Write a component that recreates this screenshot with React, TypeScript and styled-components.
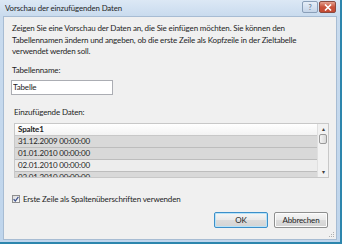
import React, { useState } from 'react';
import { styled, createGlobalStyle } from 'styled-components';

const GlobalStyle = createGlobalStyle`
    html, body {
        margin: 0;
        padding: 0;
        width: 342px;
        height: 244px;
        overflow: hidden;
        font-family: Lato, "Open Sans", sans-serif;
    }
`

const rows = ['31.12.2009 00:00:00', '01.01.2010 00:00:00', '02.01.2010 00:00:00', '03.01.2010 00:00:00'];

export default function App() {
    const [ tableName, setTableName ] = useState('Tabelle');
    const [ useHeader, setUseHeader ] = useState(true);

    return (
        <>
            <GlobalStyle />
            <Window>
                <TitleBar>
                    <Title>Vorschau der einzufügenden Daten</Title>
                    <TitleButtons>
                        <HelpButton>?</HelpButton>
                        <CloseButton>
                            <svg width="8" height="7" viewBox="0 0 8 7">
                                <path d="M1 0.5 L7 6.5 M7 0.5 L1 6.5" stroke="#fff" strokeWidth="1.6" />
                            </svg>
                        </CloseButton>
                    </TitleButtons>
                </TitleBar>
                <Client>
                    <Intro>
                        Zeigen Sie eine Vorschau der Daten an, die Sie einfügen möchten. Sie können den
                        Tabellennamen ändern und angeben, ob die erste Zeile als Kopfzeile in der Zieltabelle
                        verwendet werden soll.
                    </Intro>
                    <FieldLabel>Tabellenname:</FieldLabel>
                    <NameInput value={tableName} onChange={(e) => setTableName(e.target.value)} />
                    <FieldLabel indent>Einzufügende Daten:</FieldLabel>
                    <Grid>
                        <GridBody>
                            <HeaderCell>Spalte1</HeaderCell>
                            {rows.map((r, i) => (
                                <Cell key={r} light={i === 2}>{r}</Cell>
                            ))}
                        </GridBody>
                        <ScrollBar>
                            <ScrollArrow>▴</ScrollArrow>
                            <Thumb />
                            <ScrollTrack />
                            <ScrollArrow>▾</ScrollArrow>
                        </ScrollBar>
                    </Grid>
                    <CheckRow>
                        <CheckBox checked={useHeader} onClick={() => setUseHeader(!useHeader)}>
                            {useHeader && (
                                <svg width="6" height="6" viewBox="0 0 6 6">
                                    <path d="M0.6 3.2 L2.3 5 L5.4 0.8" stroke="#3c4f8c" strokeWidth="1.2" fill="none" />
                                </svg>
                            )}
                        </CheckBox>
                        <span>Erste Zeile als Spaltenüberschriften verwenden</span>
                    </CheckRow>
                    <ButtonRow>
                        <DialogButton primary>OK</DialogButton>
                        <DialogButton>Abbrechen</DialogButton>
                    </ButtonRow>
                    <Grip>
                        <svg width="6" height="6" viewBox="0 0 6 6">
                            <rect x="4" y="0" width="1" height="1" fill="#b0b0b0" />
                            <rect x="2" y="2" width="1" height="1" fill="#b0b0b0" />
                            <rect x="4" y="2" width="1" height="1" fill="#b0b0b0" />
                            <rect x="0" y="4" width="1" height="1" fill="#b0b0b0" />
                            <rect x="2" y="4" width="1" height="1" fill="#b0b0b0" />
                            <rect x="4" y="4" width="1" height="1" fill="#b0b0b0" />
                        </svg>
                    </Grip>
                </Client>
            </Window>
        </>
    )
}

type IndentProps = { indent?: boolean };
type CellProps = { light?: boolean };
type ButtonProps = { primary?: boolean };
type CheckProps = { checked?: boolean };

const Window = styled.div`
    display: flex;
    flex-direction: column;
    width: 340px;
    height: 242px;
    background: linear-gradient(to bottom, #dce8f5 0px, #c9dbee 16px, #bfd5ec 100%);
    border-right: 2px solid #2d86ad;
    border-bottom: 2px solid #2d86ad;
`

const TitleBar = styled.div`
    display: flex;
    align-items: center;
    justify-content: space-between;
    height: 16px;
    padding: 0 4px 0 5px;
`

const Title = styled.div`
    font-size: 7.8px;
    letter-spacing: -0.1px;
    color: #1e1e1e;
`

const TitleButtons = styled.div`
    display: flex;
    gap: 1px;
    margin-top: -2px;
`

const HelpButton = styled.div`
    width: 14px;
    height: 10px;
    border: 1px solid #8a9fb8;
    border-radius: 2px;
    background: linear-gradient(to bottom, #e6eef7, #c5d5e8);
    color: #6f8299;
    font-size: 7px;
    font-weight: bold;
    line-height: 10px;
    text-align: center;
`

const CloseButton = styled.div`
    display: flex;
    align-items: center;
    justify-content: center;
    width: 15px;
    height: 10px;
    border: 1px solid #8a4a40;
    border-radius: 2px;
    background: linear-gradient(to bottom, #e5a190, #c9523b 50%, #c44a33);
`

const Client = styled.div`
    position: relative;
    flex: 1;
    display: flex;
    flex-direction: column;
    margin: 0 3px 2px 3px;
    padding: 6px 0 0 0;
    background: #f0f0f0;
    border: 1px solid #a7bcd3;
    font-size: 8px;
    letter-spacing: -0.15px;
    color: #1e1e1e;
`

const Intro = styled.p`
    margin: 0 0 0 8px;
    width: 300px;
    line-height: 11.5px;
`

const FieldLabel = styled.div<IndentProps>`
    margin: ${props => props.indent ? '12px 0 0 10px' : '7px 0 0 8px'};
    line-height: 11px;
`

const NameInput = styled.input`
    box-sizing: border-box;
    width: 102px;
    height: 15px;
    margin: 4px 0 0 7px;
    padding: 0 1px;
    border: 1px solid #abadb3;
    background: #fff;
    font-family: inherit;
    font-size: 8px;
    letter-spacing: -0.15px;
    color: #1e1e1e;
    outline: none;
`

const Grid = styled.div`
    display: flex;
    box-sizing: border-box;
    width: 315px;
    height: 55px;
    margin: 5px 0 0 10px;
    border: 1px solid #c8c8c8;
    overflow: hidden;
    background: #fff;
`

const GridBody = styled.div`
    flex: 1;
    display: flex;
    flex-direction: column;
`

const HeaderCell = styled.div`
    box-sizing: border-box;
    height: 12px;
    padding-left: 3px;
    font-weight: bold;
    line-height: 11px;
    background: linear-gradient(to bottom, #ffffff, #f3f3f3);
    border-bottom: 1px solid #c8c8c8;
    flex-shrink: 0;
`

const Cell = styled.div<CellProps>`
    box-sizing: border-box;
    height: 12px;
    padding-left: 3px;
    line-height: 11px;
    flex-shrink: 0;
    background: ${props => props.light ? '#ededed' : '#d9d9d9'};
    border-bottom: 1px solid #bdbdbd;
`

const ScrollBar = styled.div`
    display: flex;
    flex-direction: column;
    width: 10px;
    background: #f2f2f2;
    border-left: 1px solid #e0e0e0;
`

const ScrollArrow = styled.div`
    height: 10px;
    font-size: 6px;
    line-height: 10px;
    text-align: center;
    color: #404040;
`

const Thumb = styled.div`
    height: 8px;
    margin: 0 1px;
    border: 1px solid #9a9a9a;
    border-radius: 2px;
    background: linear-gradient(to right, #f4f4f4, #d8d8d8);
`

const ScrollTrack = styled.div`
    flex: 1;
`

const CheckRow = styled.label`
    display: flex;
    align-items: center;
    gap: 3px;
    margin: 16px 0 0 8px;
    line-height: 10px;
`

const CheckBox = styled.span<CheckProps>`
    display: flex;
    align-items: center;
    justify-content: center;
    box-sizing: border-box;
    width: 8px;
    height: 8px;
    border: 1px solid #8f8f8f;
    background: linear-gradient(to bottom right, #dcdcdc, #fafafa);
`

const ButtonRow = styled.div`
    display: flex;
    justify-content: flex-end;
    gap: 6px;
    margin: 8px 8px 0 0;
`

const DialogButton = styled.button<ButtonProps>`
    box-sizing: border-box;
    width: 54px;
    height: 16px;
    padding: 0;
    border: 1px solid ${props => props.primary ? '#3c8fc9' : '#8e8f8f'};
    border-radius: 2px;
    background: linear-gradient(to bottom, #f6f6f6 0%, #e9e9e9 50%, #dcdcdc 51%, #d3d3d3 100%);
    box-shadow: ${props => props.primary ? 'inset 0 0 0 1px #b8e3f8' : 'inset 0 0 0 1px #fcfcfc'};
    font-family: inherit;
    font-size: 8px;
    letter-spacing: -0.15px;
    color: #1e1e1e;
`

const Grip = styled.div`
    position: absolute;
    right: 1px;
    bottom: 1px;
    width: 6px;
    height: 6px;
    line-height: 0;
`
